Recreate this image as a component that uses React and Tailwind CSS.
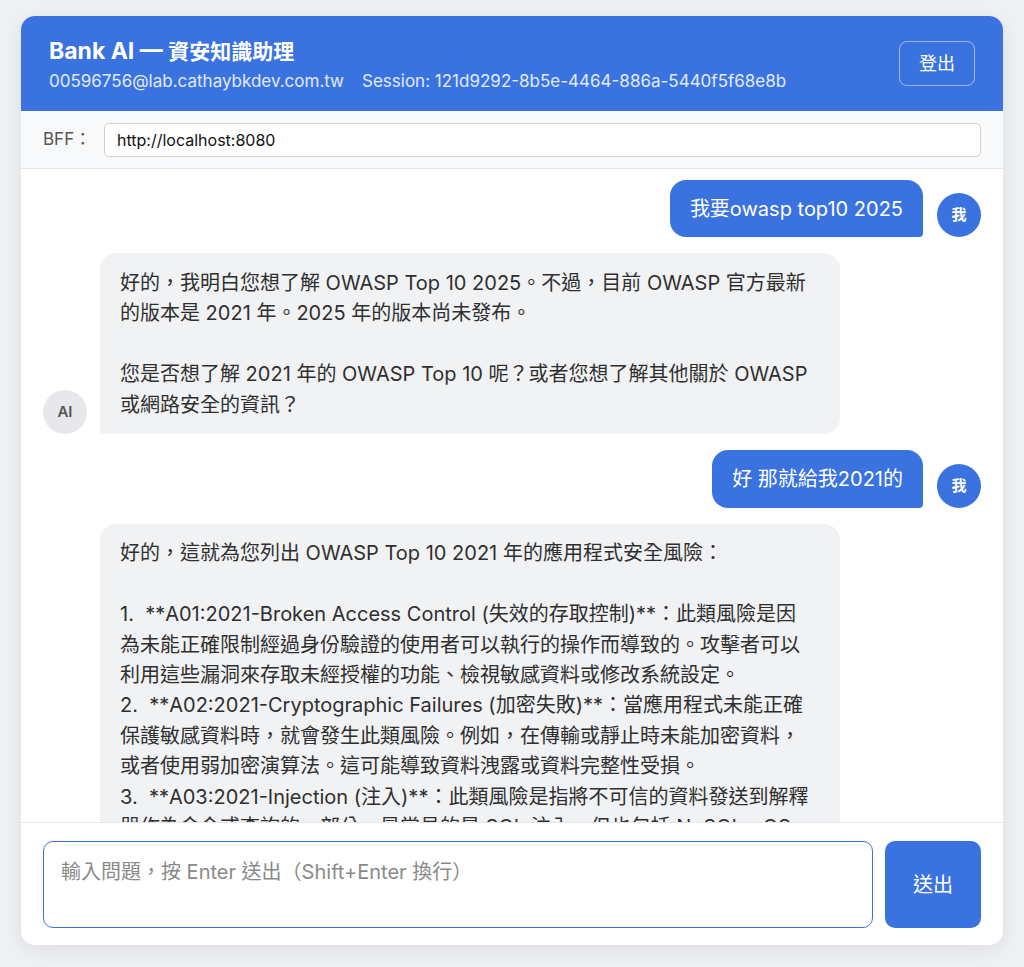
import React, { useState } from 'react';

const FONT = { fontFamily: 'Inter, "Noto Sans CJK TC", sans-serif' };

const messages = [
  { id: 1, role: 'user', text: '我要owasp top10 2025' },
  {
    id: 2,
    role: 'ai',
    text: '好的，我明白您想了解 OWASP Top 10 2025。不過，目前 OWASP 官方最新\n的版本是 2021 年。2025 年的版本尚未發布。\n\n您是否想了解 2021 年的 OWASP Top 10 呢？或者您想了解其他關於 OWASP\n或網路安全的資訊？',
  },
  { id: 3, role: 'user', text: '好 那就給我2021的' },
  {
    id: 4,
    role: 'ai',
    text:
      '好的，這就為您列出 OWASP Top 10 2021 年的應用程式安全風險：\n\n' +
      '1.  **A01:2021-Broken Access Control (失效的存取控制)**：此類風險是因\n' +
      '為未能正確限制經過身份驗證的使用者可以執行的操作而導致的。攻擊者可以\n' +
      '利用這些漏洞來存取未經授權的功能、檢視敏感資料或修改系統設定。\n' +
      '2.  **A02:2021-Cryptographic Failures (加密失敗)**：當應用程式未能正確\n' +
      '保護敏感資料時，就會發生此類風險。例如，在傳輸或靜止時未能加密資料，\n' +
      '或者使用弱加密演算法。這可能導致資料洩露或資料完整性受損。\n' +
      '3.  **A03:2021-Injection (注入)**：此類風險是指將不可信的資料發送到解釋\n' +
      '器作為命令或查詢的一部分。最常見的是 SQL 注入，但也包括 NoSQL、OS\n' +
      '命令、LDAP 注入等。攻擊者可以藉此執行非預期的命令或存取資料。\n' +
      '4.  **A04:2021-Insecure Design (不安全的設計)**：這是 2021 年新增的\n' +
      '類別，著重於與設計和架構缺陷相關的風險。',
  },
];

function Avatar({ role }) {
  if (role === 'user') {
    return (
      <div className="w-[44px] h-[44px] shrink-0 rounded-full bg-[#3a73e0] text-white flex items-center justify-center text-[15px] font-bold">
        我
      </div>
    );
  }
  return (
    <div className="w-[44px] h-[44px] shrink-0 rounded-full bg-[#e6e8eb] text-[#555] flex items-center justify-center text-[15px] font-semibold">
      AI
    </div>
  );
}

function Message({ msg }) {
  if (msg.role === 'user') {
    return (
      <div className="flex justify-end items-end gap-3.5">
        <div className="bg-[#3a73e0] text-white text-[20px] leading-[30.4px] px-5 py-[13.5px] rounded-2xl rounded-br-[4px] whitespace-pre">
          {msg.text}
        </div>
        <Avatar role="user" />
      </div>
    );
  }
  return (
    <div className="flex items-end gap-[13px]">
      <Avatar role="ai" />
      <div className="w-[740px] overflow-hidden bg-[#f1f2f4] text-[#2f2f2f] text-[20px] leading-[30.4px] px-5 py-[14.5px] rounded-2xl rounded-bl-[4px] whitespace-pre">
        {msg.text}
      </div>
    </div>
  );
}

export default function App() {
  const [bff, setBff] = useState('http://localhost:8080');
  const [input, setInput] = useState('');

  return (
    <div className="h-screen w-full bg-[#eef0f4] pt-4 pb-[22px] px-[21px] flex flex-col" style={FONT}>
      <div className="flex-1 min-h-0 flex flex-col bg-white rounded-[14px] overflow-hidden shadow-[0_4px_20px_rgba(0,0,0,0.08)]">
        {/* Header */}
        <div className="h-[95px] shrink-0 bg-[#3a73e0] px-7 flex items-center justify-between">
          <div className="pt-[2px]">
            <div className="text-white text-[21px] leading-[28px] font-bold">
              <span className="text-[23px]">Bank AI — </span>資安知識助理
            </div>
            <div className="mt-[3px] flex gap-[18px] text-[17px] leading-[24px] text-white/85">
              <span>00596756@lab.cathaybkdev.com.tw</span>
              <span>Session: 121d9292-8b5e-4464-886a-5440f5f68e8b</span>
            </div>
          </div>
          <button className="h-[45px] px-[19px] rounded-lg border border-white/50 text-white text-[18px]">登出</button>
        </div>

        {/* BFF bar */}
        <div className="h-[58px] shrink-0 bg-[#f8f9fb] border-b border-[#e2e4e8] px-[22px] flex items-center">
          <span className="w-[61px] shrink-0 text-[17px] text-[#555]">BFF：</span>
          <input
            value={bff}
            onChange={(e) => setBff(e.target.value)}
            className="flex-1 h-[34px] px-3 bg-white border border-[#cfd2d6] rounded-[5px] text-[16px] text-[#111] outline-none"
          />
        </div>

        {/* Messages */}
        <div className="flex-1 min-h-0 overflow-hidden px-[22px] pt-[11px] flex flex-col gap-4">
          {messages.map((m) => (
            <Message key={m.id} msg={m} />
          ))}
        </div>

        {/* Composer */}
        <div className="shrink-0 border-t border-[#e5e7eb] px-[22px] pt-[18px] pb-[17px] flex gap-3">
          <textarea
            value={input}
            onChange={(e) => setInput(e.target.value)}
            placeholder="輸入問題，按 Enter 送出（Shift+Enter 換行）"
            className="flex-1 h-[87px] resize-none rounded-[10px] border border-[#3a73e0] px-[17px] py-[16px] text-[20px] leading-[28px] text-[#222] placeholder:text-[#8a8a8a] outline-none"
          />
          <button className="w-[96px] h-[87px] rounded-[10px] bg-[#3a73e0] text-white text-[20px]">送出</button>
        </div>
      </div>
    </div>
  );
}
